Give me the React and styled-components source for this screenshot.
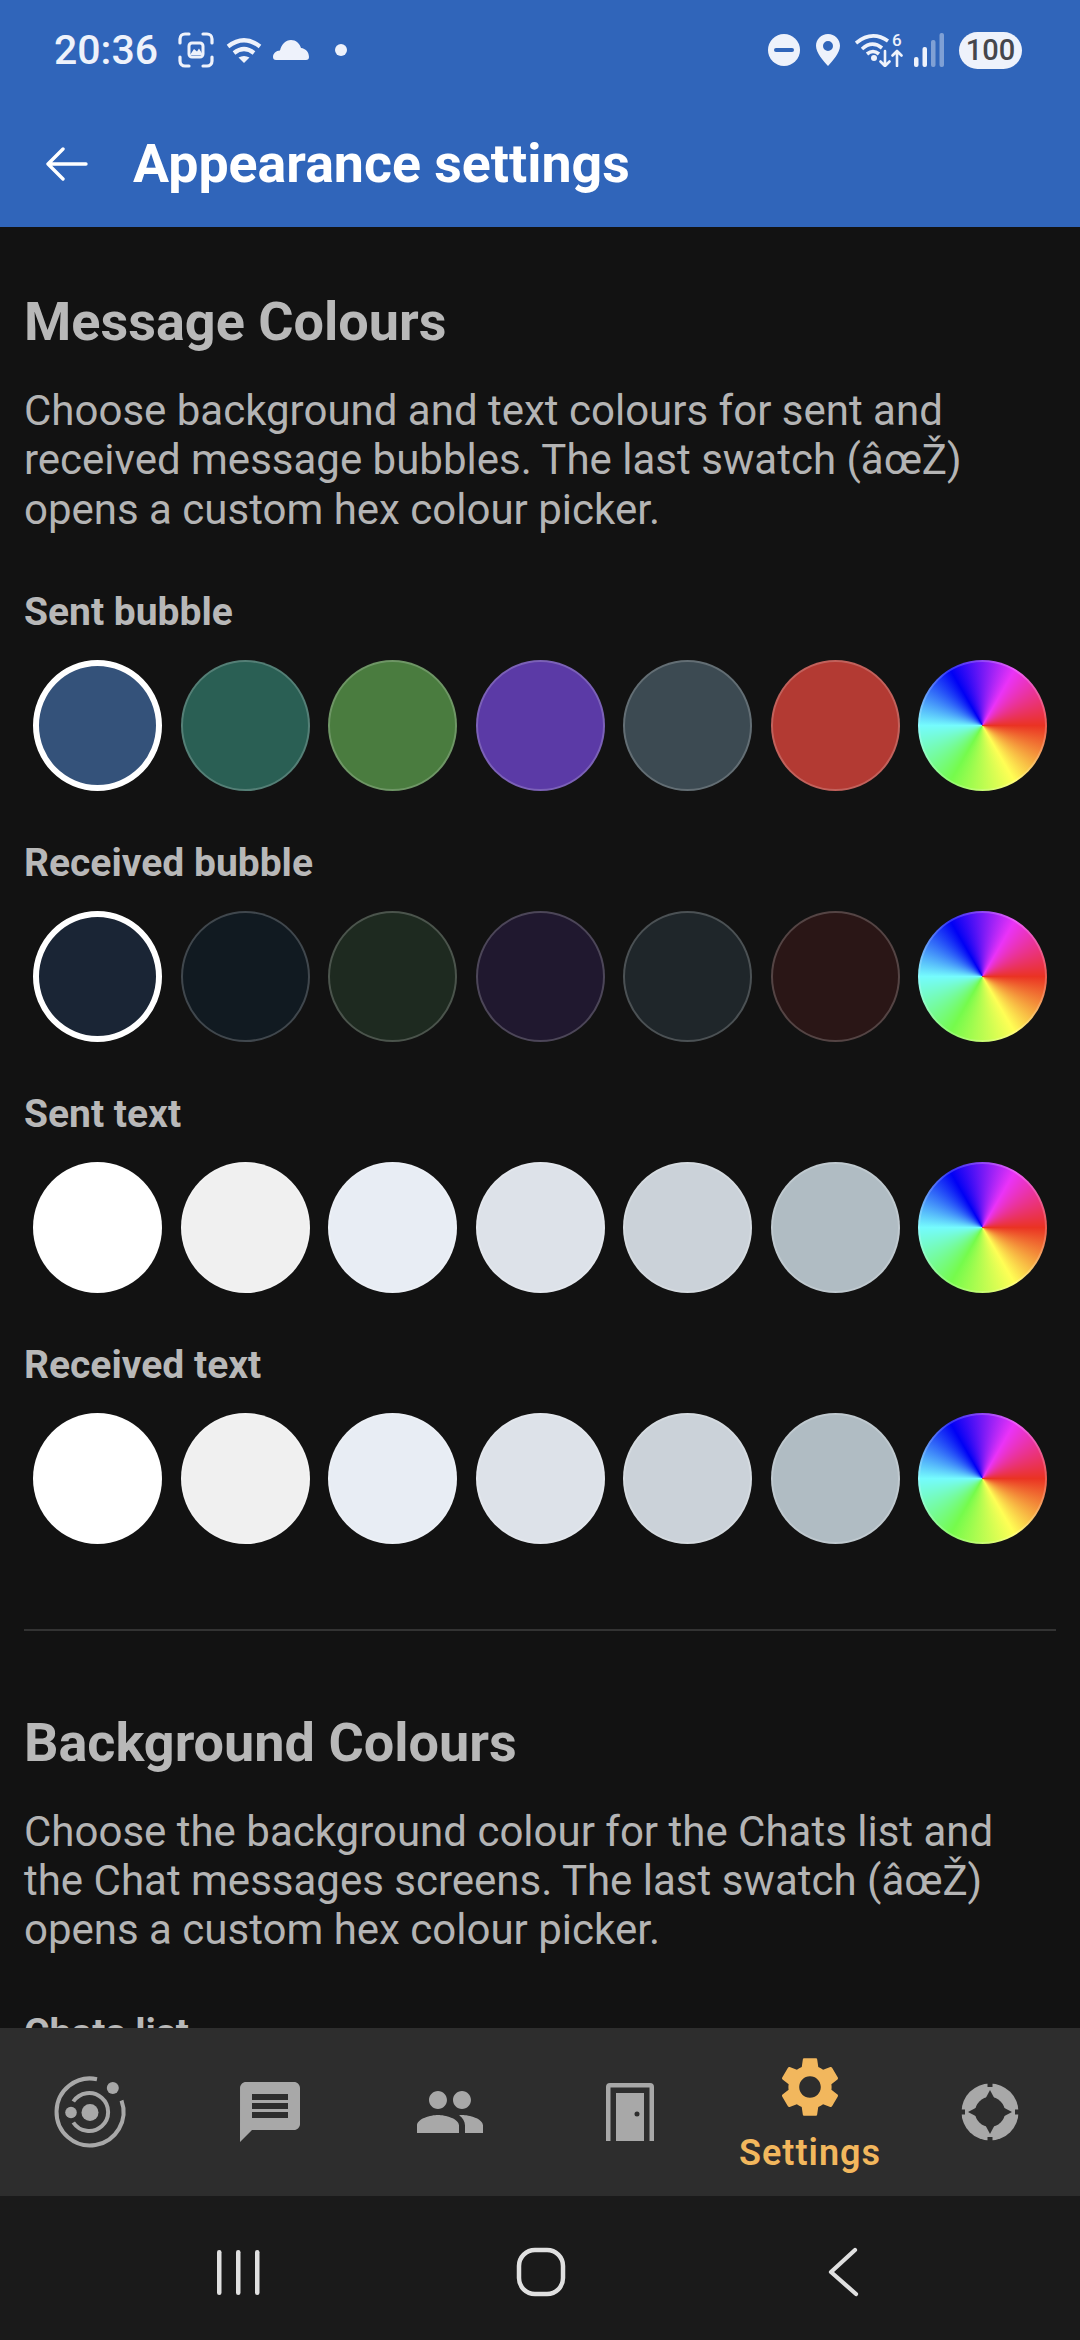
import React from "react";
import styled, { createGlobalStyle } from "styled-components";

const GlobalStyle = createGlobalStyle`
  html, body {
    margin: 0;
    padding: 0;
    background: #121212;
  }
`;

const Screen = styled.div`
  width: 1080px;
  height: 2340px;
  display: flex;
  flex-direction: column;
  overflow: hidden;
  background: #121212;
  font-family: Roboto, "Liberation Sans", sans-serif;
`;

const Header = styled.header`
  height: 227px;
  flex: none;
  background: #3065ba;
`;

const StatusBar = styled.div`
  height: 100px;
  padding: 0 58px 0 54px;
  display: flex;
  align-items: center;
  justify-content: space-between;
  color: #eef2fb;
`;

const StatusGroup = styled.div`
  display: flex;
  align-items: center;
`;

const Clock = styled.span`
  font-size: 41px;
  font-weight: 500;
  line-height: 1;
`;

const StatusIcon = styled.svg`
  display: block;
  flex: none;
  margin-left: ${(p) => p.$ml || 0}px;
`;

const Battery = styled.span`
  margin-left: 15px;
  width: 63px;
  height: 37px;
  border-radius: 19px;
  background: #eef2fb;
  color: #45464c;
  font-size: 29px;
  font-weight: 500;
  display: flex;
  align-items: center;
  justify-content: center;
`;

const AppBar = styled.div`
  height: 127px;
  padding: 0 0 0 46px;
  box-sizing: border-box;
  display: flex;
  align-items: center;
  gap: 45px;
`;

const Title = styled.h1`
  margin: 0;
  color: #fff;
  font-size: 53.7px;
  font-weight: 700;
  line-height: 1;
`;

const Content = styled.main`
  flex: 1;
  min-height: 0;
  overflow: hidden;
  padding: 65px 24px 0;
`;

const SectionTitle = styled.h2`
  margin: 0;
  color: #b8b8b8;
  font-size: 54px;
  font-weight: 700;
  line-height: 60px;
`;

const Description = styled.p`
  margin: 34px 0 0;
  color: #b4b4b4;
  font-size: 42px;
  font-weight: 400;
  line-height: 49.3px;
`;

const Group = styled.div`
  margin-top: ${(p) => p.$top}px;
`;

const GroupLabel = styled.div`
  color: #b8b8b8;
  font-size: 39px;
  font-weight: 700;
  line-height: 44px;
`;

const SwatchRow = styled.div`
  margin-top: 26px;
  padding: 0 9px;
  display: flex;
  justify-content: space-between;
`;

const Swatch = styled.div`
  width: 129px;
  height: 131px;
  flex: none;
  box-sizing: border-box;
  border-radius: 50%;
  background: ${(p) => p.$color};
  border: ${(p) =>
    p.$selected ? "6px solid #fff" : "2px solid rgba(255, 255, 255, 0.2)"};
`;

const CustomSwatch = styled(Swatch)`
  background: conic-gradient(
    from 90deg,
    #ea3323,
    #fffe55 60deg,
    #75fb4c 120deg,
    #75fbfd 180deg,
    #0000f5 240deg,
    #ea33f7 300deg,
    #ea3323 360deg
  );
  background-origin: border-box;
`;

const Divider = styled.hr`
  margin: 85px 0 0;
  border: none;
  height: 2px;
  background: #333;
`;

const TabBar = styled.nav`
  height: 168px;
  flex: none;
  display: grid;
  grid-template-columns: repeat(6, 180px);
  background: #2d2d2d;
`;

const Tab = styled.div`
  display: flex;
  flex-direction: column;
  align-items: center;
  justify-content: center;
  color: ${(p) => (p.$active ? "#f2b75d" : "#a8a8a8")};
`;

const TabLabel = styled.span`
  margin-top: 10px;
  font-size: 36px;
  font-weight: 600;
  letter-spacing: 1px;
  line-height: 40px;
`;

const NavBar = styled.div`
  height: 144px;
  flex: none;
  box-sizing: border-box;
  padding: 7px 0 0 217px;
  background: #1a1a1a;
  display: flex;
  align-items: center;
  color: #e0e0e0;
`;

const NavIcon = styled.svg`
  display: block;
  flex: none;
  margin-left: ${(p) => p.$ml || 0}px;
`;

const sentBubble = ["#34527a", "#2a5f54", "#4a7c3f", "#5b3aa6", "#3c4a52", "#b33a33"];
const receivedBubble = ["#1a2535", "#111a21", "#1e2a20", "#20182f", "#1f262a", "#2a1616"];
const textColours = ["#ffffff", "#f0f0f0", "#e8edf4", "#dde2e9", "#cbd2d9", "#b0bcc3"];

const groups = [
  { label: "Sent bubble", colors: sentBubble, selected: true, top: 56 },
  { label: "Received bubble", colors: receivedBubble, selected: true, top: 50 },
  { label: "Sent text", colors: textColours, top: 50 },
  { label: "Received text", colors: textColours, top: 50 },
];

const BackArrow = () => (
  <svg width="42" height="34" viewBox="0 0 42 34" fill="none" stroke="#fff" strokeWidth="3.4" strokeLinecap="round" strokeLinejoin="round">
    <path d="M2 17h38M17 2 2 17l15 15" />
  </svg>
);

const ScreenshotIcon = () => (
  <StatusIcon $ml={20} width="36" height="36" viewBox="0 0 36 36" fill="none" stroke="currentColor">
    <path strokeWidth="3.2" strokeLinecap="round" d="M11 2H7a5 5 0 0 0-5 5v4M25 2h4a5 5 0 0 1 5 5v4M11 34H7a5 5 0 0 1-5-5v-4M25 34h4a5 5 0 0 0 5-5v-4" />
    <rect x="11" y="11" width="14" height="14" rx="3" strokeWidth="3" />
    <path fill="currentColor" stroke="none" d="M12 23l4-6 3 2.5 2-3 4 6.5z" />
  </StatusIcon>
);

const WifiIcon = () => (
  <StatusIcon $ml={12} width="36" height="26" viewBox="0 0 36 26" fill="none" stroke="currentColor" strokeWidth="4.2">
    <path d="M2 9.500Q18-3 34 9.500M8 16Q18 8 28 16" />
    <path fill="currentColor" stroke="none" d="M12.500 20.500Q18 17.500 23.500 20.500L18 26z" />
  </StatusIcon>
);

const CloudIcon = () => (
  <StatusIcon $ml={11} width="36" height="20" viewBox="0 0 36 20" fill="currentColor">
    <path d="M3 20c-2 0-3-1.200-3-3 0-3.600 3-6.400 7-6.600C8.500 4.500 12.500 0 18 0c5 0 8.600 3.300 10 8 4.500.5 8 4 8 9 0 2-1 3-3 3z" />
  </StatusIcon>
);

const DndIcon = () => (
  <StatusIcon width="32" height="32" viewBox="0 0 32 32">
    <circle cx="16" cy="16" r="16" fill="currentColor" />
    <rect x="6" y="14" width="20" height="4" rx="2" fill="#3065ba" />
  </StatusIcon>
);

const PinIcon = () => (
  <StatusIcon $ml={16} width="24" height="32" viewBox="0 0 24 32">
    <path fill="currentColor" fillRule="evenodd" d="M12 0c6.700 0 12 5.200 12 11.800C24 19 16.500 27 12 32 7.500 27 0 19 0 11.800 0 5.200 5.300 0 12 0zm0 7a5 5 0 1 0 0 10 5 5 0 0 0 0-10z" />
  </StatusIcon>
);

const WifiCallIcon = () => (
  <StatusIcon $ml={15} width="48" height="34" viewBox="0 0 48 34" fill="none" stroke="currentColor" strokeWidth="3.6">
    <path d="M1 10Q17-3 33 8M7 16Q17 7 27 15M12 21Q18 16 24 21" />
    <circle cx="19" cy="25" r="3" fill="currentColor" stroke="none" />
    <path strokeWidth="2.6" strokeLinecap="round" strokeLinejoin="round" d="M30 18v15M25.500 28.500 30 33l4.500-4.500M42 33V18M37.500 22.500 42 18l4.500 4.500" />
    <text x="37" y="13" fontSize="17" fontWeight="500" fontFamily="Roboto" fill="currentColor" stroke="none">6</text>
  </StatusIcon>
);

const SignalIcon = () => (
  <StatusIcon $ml={11} width="30" height="34" viewBox="0 0 30 34" fill="currentColor">
    <rect x="0" y="24" width="4.500" height="10" rx="2" />
    <rect x="8.500" y="14" width="4.500" height="20" rx="2" />
    <rect x="17" y="7" width="4.500" height="27" rx="2" opacity="0.42" />
    <rect x="25.500" y="0" width="4.500" height="34" rx="2" opacity="0.42" />
  </StatusIcon>
);

const OrbitIcon = () => (
  <svg width="90" height="90" viewBox="0 0 90 90" fill="none" stroke="currentColor" strokeWidth="4">
    <path d="M76.500 33.500A33.500 33.500 0 1 1 52 12.200" />
    <path d="M28.300 34.500A19 19 0 1 1 28.300 55.500" />
    <g fill="currentColor" stroke="none">
      <circle cx="45" cy="45.500" r="8.500" />
      <circle cx="26" cy="45.500" r="5.800" />
      <circle cx="67.800" cy="21" r="6" />
    </g>
  </svg>
);

const MessageIcon = () => (
  <svg width="72" height="72" viewBox="0 0 24 24" fill="currentColor">
    <path d="M20 2H4c-1.100 0-1.990.9-1.990 2L2 22l4-4h14c1.100 0 2-.9 2-2V4c0-1.100-.9-2-2-2zm-2 12H6v-2h12v2zm0-3H6V9h12v2zm0-3H6V6h12v2z" />
  </svg>
);

const PeopleIcon = () => (
  <svg width="72" height="72" viewBox="0 0 24 24" fill="currentColor">
    <path d="M16 11c1.660 0 2.990-1.340 2.990-3S17.660 5 16 5c-1.660 0-3 1.340-3 3s1.340 3 3 3zm-8 0c1.660 0 2.990-1.340 2.990-3S9.660 5 8 5C6.340 5 5 6.340 5 8s1.340 3 3 3zm0 2c-2.330 0-7 1.170-7 3.500V19h14v-2.500c0-2.330-4.670-3.500-7-3.500zm8 0c-.29 0-.62.02-.97.05 1.160.84 1.970 1.970 1.970 3.450V19h6v-2.500c0-2.330-4.670-3.500-7-3.500z" />
  </svg>
);

const DoorIcon = () => (
  <svg width="72" height="72" viewBox="0 0 72 72" fill="currentColor">
    <path d="M12 65V11a4 4 0 0 1 4-4h40a4 4 0 0 1 4 4v54h-4.500V11.500h-39V65z" />
    <path fillRule="evenodd" d="M22 17h28v48H22zM43 35.500a2.500 2.500 0 1 0 0 5 2.500 2.500 0 0 0 0-5z" />
  </svg>
);

const GearIcon = () => (
  <svg width="72" height="72" viewBox="0 0 24 24" fill="currentColor">
    <path d="M19.140 12.940c.04-.3.06-.61.06-.94 0-.32-.02-.64-.07-.94l2.030-1.580c.18-.14.23-.41.12-.61l-1.920-3.320c-.12-.22-.37-.29-.59-.22l-2.390.96c-.5-.38-1.030-.7-1.620-.94l-.36-2.540c-.04-.24-.24-.41-.48-.41h-3.840c-.24 0-.43.17-.47.41l-.36 2.540c-.59.24-1.130.57-1.620.94l-2.390-.96c-.22-.08-.47 0-.59.22L2.740 8.870c-.12.21-.08.47.12.61l2.030 1.580c-.05.3-.09.63-.09.94s.02.64.07.94l-2.030 1.580c-.18.14-.23.41-.12.61l1.920 3.320c.12.22.37.29.59.22l2.390-.96c.5.38 1.030.7 1.620.94l.36 2.540c.05.24.24.41.48.41h3.840c.24 0 .44-.17.47-.41l.36-2.540c.59-.24 1.130-.56 1.620-.94l2.390.96c.22.08.47 0 .59-.22l1.920-3.320c.12-.22.07-.47-.12-.61l-2.010-1.580zM12 15.600c-1.980 0-3.600-1.620-3.600-3.600s1.620-3.600 3.600-3.600 3.600 1.620 3.600 3.600-1.620 3.600-3.600 3.600z" />
  </svg>
);

const RingIcon = () => (
  <svg width="72" height="72" viewBox="-36 -36 72 72">
    <circle r="28.500" fill="currentColor" />
    <circle r="15" fill="#2d2d2d" />
    {[0, 90, 180, 270].map((deg) => (
      <g key={deg} transform={`rotate(${deg})`} fill="#2d2d2d">
        <path d="M-4.500-13.500 0-22 4.500-13.500z" />
        <rect x="-2.500" y="-30" width="5" height="5" />
      </g>
    ))}
  </svg>
);

const tabs = [OrbitIcon, MessageIcon, PeopleIcon, DoorIcon];

const App = () => {
  return (
    <Screen>
      <GlobalStyle />
      <Header>
        <StatusBar>
          <StatusGroup>
            <Clock>20:36</Clock>
            <ScreenshotIcon />
            <WifiIcon />
            <CloudIcon />
            <StatusIcon $ml={26} width="12" height="12" viewBox="0 0 12 12">
              <circle cx="6" cy="6" r="6" fill="currentColor" />
            </StatusIcon>
          </StatusGroup>
          <StatusGroup>
            <DndIcon />
            <PinIcon />
            <WifiCallIcon />
            <SignalIcon />
            <Battery>100</Battery>
          </StatusGroup>
        </StatusBar>
        <AppBar>
          <BackArrow />
          <Title>Appearance settings</Title>
        </AppBar>
      </Header>

      <Content>
        <SectionTitle>Message Colours</SectionTitle>
        <Description>
          Choose background and text colours for sent and received message
          bubbles. The last swatch (âœŽ) opens a custom hex colour picker.
        </Description>
        {groups.map((group) => (
          <Group key={group.label} $top={group.top}>
            <GroupLabel>{group.label}</GroupLabel>
            <SwatchRow>
              {group.colors.map((color, i) => (
                <Swatch key={color} $color={color} $selected={group.selected && i === 0} />
              ))}
              <CustomSwatch />
            </SwatchRow>
          </Group>
        ))}
        <Divider />
        <Group $top={82}>
          <SectionTitle>Background Colours</SectionTitle>
          <Description>
            Choose the background colour for the Chats list and the Chat
            messages screens. The last swatch (âœŽ) opens a custom hex colour
            picker.
          </Description>
        </Group>
        <Group $top={56}>
          <GroupLabel>Chats list</GroupLabel>
        </Group>
      </Content>

      <TabBar>
        {tabs.map((Icon, i) => (
          <Tab key={i}>
            <Icon />
          </Tab>
        ))}
        <Tab $active>
          <GearIcon />
          <TabLabel>Settings</TabLabel>
        </Tab>
        <Tab>
          <RingIcon />
        </Tab>
      </TabBar>

      <NavBar>
        <NavIcon width="44" height="50" viewBox="0 0 44 50" fill="currentColor">
          <rect x="0" y="3" width="4.500" height="45" rx="2.200" />
          <rect x="19" y="3" width="4.500" height="45" rx="2.200" />
          <rect x="38" y="3" width="4.500" height="45" rx="2.200" />
        </NavIcon>
        <NavIcon $ml={255} width="50" height="50" viewBox="0 0 50 50" fill="none" stroke="currentColor" strokeWidth="4.500">
          <rect x="3" y="3" width="44" height="44" rx="16" />
        </NavIcon>
        <NavIcon $ml={261} width="32" height="50" viewBox="0 0 32 50" fill="none" stroke="currentColor" strokeWidth="4.200" strokeLinecap="round" strokeLinejoin="round">
          <path d="M28 3 4 25l25 22" />
        </NavIcon>
      </NavBar>
    </Screen>
  );
};

export default App;
